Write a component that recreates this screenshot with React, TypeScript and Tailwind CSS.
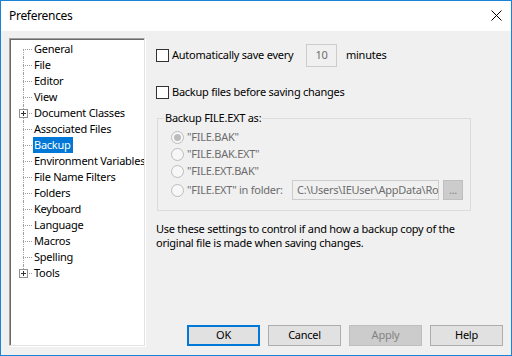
import React from 'react';

const treeItems = [
  { label: 'General' },
  { label: 'File' },
  { label: 'Editor' },
  { label: 'View' },
  { label: 'Document Classes', expandable: true },
  { label: 'Associated Files' },
  { label: 'Backup', selected: true },
  { label: 'Environment Variables' },
  { label: 'File Name Filters' },
  { label: 'Folders' },
  { label: 'Keyboard' },
  { label: 'Language' },
  { label: 'Macros' },
  { label: 'Spelling' },
  { label: 'Tools', expandable: true },
];

const radios = ['"FILE.BAK"', '"FILE.BAK.EXT"', '"FILE.EXT.BAK"'];

function TreeRow({
  label,
  expandable,
  selected,
  first,
  last,
}: {
  label: string;
  expandable?: boolean;
  selected?: boolean;
  first: boolean;
  last: boolean;
}) {
  return (
    <div className="flex h-[16px] items-center">
      {/* connector lines */}
      <div className="relative h-[16px] w-[22px] shrink-0">
        <div
          className={
            'absolute left-[12px] w-0 border-l border-dotted border-[#a0a0a0] ' +
            (first ? 'top-[8px] bottom-0' : last ? 'top-0 h-[8px]' : 'top-0 bottom-0')
          }
        />
        <div className="absolute left-[12px] top-[8px] h-0 w-[9px] border-t border-dotted border-[#a0a0a0]" />
        {expandable && (
          <div className="absolute left-[8px] top-[4px] flex h-[9px] w-[9px] items-center justify-center border border-[#919191] bg-white">
            <div className="relative h-[5px] w-[5px]">
              <div className="absolute left-0 top-[2px] h-[1px] w-[5px] bg-[#333]" />
              <div className="absolute left-[2px] top-0 h-[5px] w-[1px] bg-[#333]" />
            </div>
          </div>
        )}
      </div>
      <span
        className={
          'whitespace-nowrap leading-[16px] ' +
          (selected ? 'bg-[#0078d7] pl-[1px] pr-[2px] text-white' : 'px-[1px] text-black')
        }
      >
        {label}
      </span>
    </div>
  );
}

function Radio({ checked }: { checked?: boolean }) {
  return (
    <div className="flex h-[13px] w-[13px] shrink-0 items-center justify-center rounded-full border border-[#bcbcbc] bg-[#f7f7f7]">
      {checked && <div className="h-[7px] w-[7px] rounded-full bg-[#bcbcbc]" />}
    </div>
  );
}

function Checkbox() {
  return <div className="h-[13px] w-[13px] shrink-0 border border-[#333] bg-white" />;
}

function DialogButton({
  children,
  primary,
  disabled,
}: {
  children: React.ReactNode;
  primary?: boolean;
  disabled?: boolean;
}) {
  return (
    <button
      className={
        'flex h-[21px] w-[73px] items-center justify-center ' +
        (primary
          ? 'border-2 border-[#0078d7] bg-[#e1e1e1] text-black'
          : disabled
            ? 'border border-[#bfbfbf] bg-[#cccccc] text-[#838383]'
            : 'border border-[#adadad] bg-[#e1e1e1] text-black')
      }
    >
      {children}
    </button>
  );
}

export default function App() {
  return (
    <div
      className="flex h-[356px] w-[512px] flex-col border border-[#1883d7] text-[11px] tracking-[-0.25px] text-black"
      style={{ fontFamily: '"Noto Sans", "Open Sans", sans-serif' }}
    >
      {/* Title bar */}
      <div className="flex h-[30px] shrink-0 items-center justify-between bg-white pl-[8px] pr-[9px]">
        <span className="text-[12px] tracking-[-0.3px]">Preferences</span>
        <svg width="11" height="11" viewBox="0 0 11 11" className="mb-[1px]">
          <path d="M0.5 0.5 L10.5 10.5 M10.5 0.5 L0.5 10.5" stroke="#000" strokeWidth="1" />
        </svg>
      </div>

      {/* Body */}
      <div className="flex flex-1 bg-[#f0f0f0] pl-[8px] pt-[7px]">
        {/* Tree */}
        <div className="h-[309px] w-[137px] shrink-0 border-r border-b border-white">
          <div className="h-full w-full border-t border-l border-[#a0a0a0] border-r border-b border-r-[#e3e3e3] border-b-[#e3e3e3] bg-white">
            <div className="h-full overflow-hidden border-t border-l border-[#696969] pt-[1px]">
              {treeItems.map((item, i) => (
                <TreeRow
                  key={item.label}
                  label={item.label}
                  expandable={item.expandable}
                  selected={item.selected}
                  first={i === 0}
                  last={i === treeItems.length - 1}
                />
              ))}
            </div>
          </div>
        </div>

        {/* Right panel */}
        <div className="flex flex-1 flex-col pl-[10px] pr-[8px] pb-[9px]">
          <div className="mt-[6px] flex h-[23px] items-center">
            <Checkbox />
            <span className="ml-[3px] w-[134px]">Automatically save every</span>
            <div className="flex h-[23px] w-[31px] items-center justify-center border border-[#cccccc] text-[#6d6d6d]">
              10
            </div>
            <span className="ml-[9px]">minutes</span>
          </div>

          <div className="mt-[17px] flex h-[16px] items-center">
            <Checkbox />
            <span className="ml-[3px]">Backup files before saving changes</span>
          </div>

          <fieldset className="mt-[10px] ml-[1px] w-[314px] border border-[#dcdcdc] pl-[13px] pb-[10px]">
            <legend className="-ml-[7px] px-[1px] leading-[16px]">Backup FILE.EXT as:</legend>
            <div className="mt-[3px] flex flex-col text-[#6d6d6d]">
              {radios.map((r, i) => (
                <div key={r} className="flex h-[17px] items-center">
                  <Radio checked={i === 0} />
                  <span className="ml-[3px]">{r}</span>
                </div>
              ))}
              <div className="flex h-[20px] items-center">
                <div className="flex w-[121px] shrink-0 items-center">
                  <Radio />
                  <span className="ml-[3px] whitespace-nowrap">"FILE.EXT" in folder:</span>
                </div>
                <div className="flex h-[20px] w-[147px] shrink-0 items-center overflow-hidden whitespace-nowrap border border-[#cccccc] pl-[4px] text-[#6d6d6d]">
                  C:\Users\IEUser\AppData\Ro
                </div>
                <div className="ml-[4px] flex h-[20px] w-[20px] shrink-0 items-center justify-center border border-[#bfbfbf] bg-[#cccccc] text-[#838383]">
                  ...
                </div>
              </div>
            </div>
          </fieldset>

          <p className="mt-[11px] leading-[14px]">
            Use these settings to control if and how a backup copy of the
            <br />
            original file is made when saving changes.
          </p>

          <div className="mt-auto flex justify-end gap-[8px]">
            <DialogButton primary>OK</DialogButton>
            <DialogButton>Cancel</DialogButton>
            <DialogButton disabled>Apply</DialogButton>
            <DialogButton>Help</DialogButton>
          </div>
        </div>
      </div>
    </div>
  );
}
